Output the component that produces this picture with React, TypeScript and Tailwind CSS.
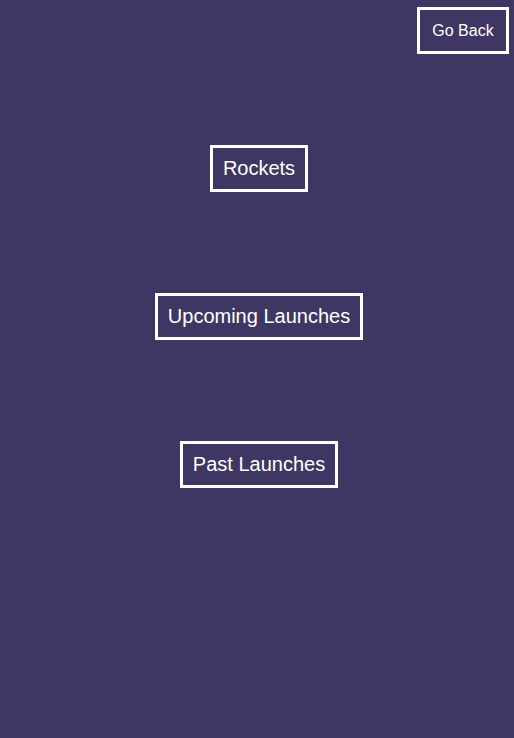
import React from "react";

const links = ["Rockets", "Upcoming Launches", "Past Launches"];

export default function App() {
  return (
    <div
      className="min-h-screen w-full bg-[#3e3764] text-white"
      style={{ fontFamily: '"Liberation Sans", Arial, sans-serif' }}
    >
      <div className="flex justify-end pt-[7px] pr-[5px]">
        <button className="h-[47px] w-[92px] border-[3px] border-white text-[16px] text-white">
          Go Back
        </button>
      </div>

      <div className="mt-[91px] flex flex-col items-center gap-[101px] pl-[4px]">
        {links.map((label) => (
          <button
            key={label}
            className="h-[47px] border-[3px] border-white px-[10px] text-[20px] leading-[23px] text-white"
          >
            {label}
          </button>
        ))}
      </div>
    </div>
  );
}
